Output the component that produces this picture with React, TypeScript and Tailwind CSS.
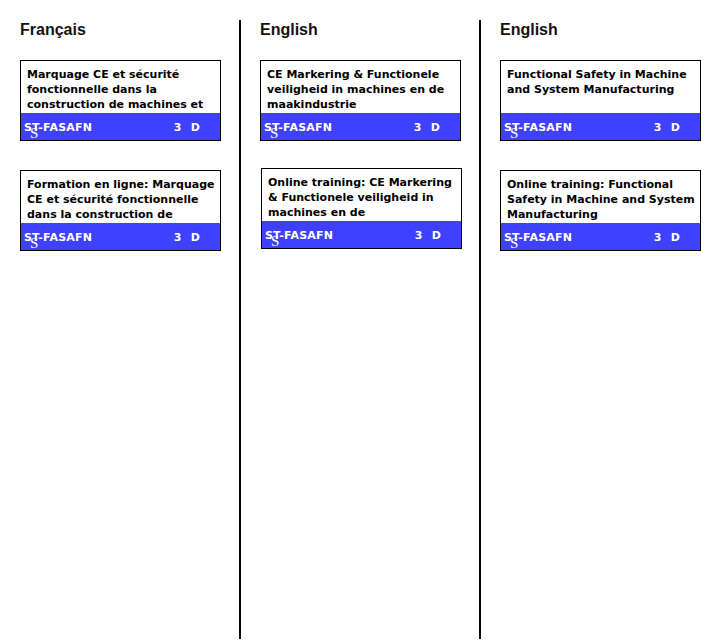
type Course = { title: string; shift?: boolean };

const columns: { lang: string; courses: Course[] }[] = [
  {
    lang: "Français",
    courses: [
      { title: "Marquage CE et sécurité fonctionnelle dans la construction de machines et d'installations" },
      { title: "Formation en ligne: Marquage CE et sécurité fonctionnelle dans la construction de machines et d'installations" },
    ],
  },
  {
    lang: "English",
    courses: [
      { title: "CE Markering & Functionele veiligheid in machines en de maakindustrie" },
      { title: "Online training: CE Markering & Functionele veiligheid in machines en de maakindustrie", shift: true },
    ],
  },
  {
    lang: "English",
    courses: [
      { title: "Functional Safety in Machine and System Manufacturing" },
      { title: "Online training: Functional Safety in Machine and System Manufacturing" },
    ],
  },
];

const CourseCard = ({ course, first }: { course: Course; first: boolean }) => (
  <div
    className={`w-[201px] border border-black bg-white ${
      first ? "mt-[21px]" : course.shift ? "mt-[27px] ml-[1px]" : "mt-[29px]"
    }`}
  >
    <div className="h-[52px] overflow-hidden pl-[6px] pr-[4px] pt-[6px] text-[11px] leading-[15px] font-bold text-black font-['DejaVu_Sans',Verdana,sans-serif]">
      {course.title}
    </div>
    <div className="relative flex h-[27px] bg-[#4040ff] pl-[3px] pr-[20px] pt-[8px] text-[11px] leading-[13px] tracking-[0.2px] font-bold text-white font-['DejaVu_Sans',Verdana,sans-serif]">
      <span>ST-FASAFN</span>
      <span className="absolute left-[9px] top-[13px] text-[15px] leading-none font-normal font-['Liberation_Serif',serif]">
        S
      </span>
      <div className="ml-auto flex gap-[9px]">
        <span>3</span>
        <span>D</span>
      </div>
    </div>
  </div>
);

export default function App() {
  return (
    <div className="h-[642px] w-[711px] bg-white pt-[20px]">
      <div className="flex h-[619px]">
        {columns.map((col, i) => (
          <div
            key={i}
            className={`${i === 0 ? "w-[239px] pl-[20px]" : i === 1 ? "w-[240px] border-l-2 border-black pl-[19px]" : "flex-1 border-l-2 border-black pl-[19px]"}`}
          >
            <h2 className="pt-[1px] text-[16px] leading-[18px] font-bold text-[#111] font-['Liberation_Sans',Arial,sans-serif]">
              {col.lang}
            </h2>
            {col.courses.map((c, j) => (
              <CourseCard key={j} course={c} first={j === 0} />
            ))}
          </div>
        ))}
      </div>
    </div>
  );
}
